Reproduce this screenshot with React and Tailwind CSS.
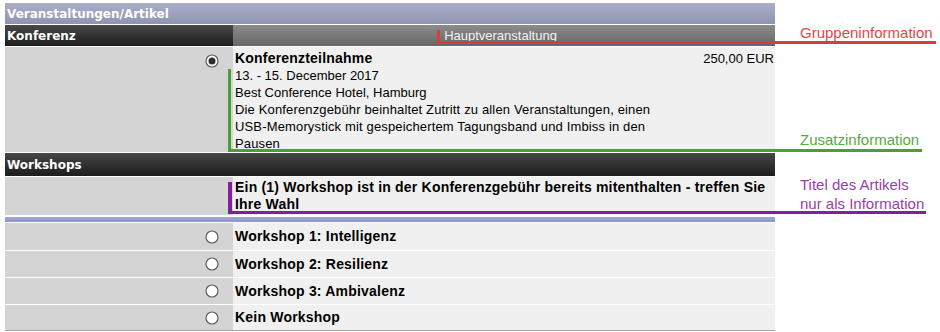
import React from "react";

function Radio({ checked }) {
  return (
    <svg width="14" height="14" viewBox="0 0 14 14" className="block">
      <circle cx="7" cy="7" r="6" fill="#ffffff" stroke="#5c5c5c" strokeWidth="1.2" />
      {checked && <circle cx="7" cy="7" r="3.5" fill="#2e2e2e" />}
    </svg>
  );
}

function WorkshopRow({ label, h, last }) {
  return (
    <div className={`flex ${h} ${last ? "border-b border-[#a8a8a8]" : "mb-px"}`}>
      <div className="w-[228px] bg-[#d4d4d4] flex items-center justify-end pr-[14px]">
        <Radio />
      </div>
      <div className="flex-1 bg-[#f0f0f0] flex items-center pl-[2px] text-[14px] font-bold tracking-[0.2px] text-black">
        {label}
      </div>
    </div>
  );
}

export default function App() {
  const sans = "font-['Liberation_Sans',Arial,sans-serif]";
  const hdr = "font-['DejaVu_Sans',Verdana,sans-serif] font-bold text-[12px] text-white";
  return (
    <div className={`relative w-[940px] h-[332px] bg-white overflow-hidden ${sans}`}>
      <div className="ml-[5px] pt-[3px] w-[770px] flex flex-col">
        {/* Header */}
        <div className={`h-[21px] mb-px flex items-center pl-[2px] bg-linear-to-b from-[#a9afc9] to-[#8f95b1] ${hdr}`}>
          Veranstaltungen/Artikel
        </div>
        {/* Konferenz group */}
        <div className="h-[21px] mb-px flex">
          <div className={`w-[228px] flex items-center pl-[2px] bg-linear-to-b from-[#4a4a4a] to-[#1d1d1d] ${hdr}`}>
            Konferenz
          </div>
          <div className="flex-1 flex items-center justify-center pr-[7px] bg-linear-to-b from-[#8c8c8c] to-[#676767] text-[13px] text-[#f2f2f2]">
            Hauptveranstaltung
          </div>
        </div>
        <div className="h-[105px] mb-px flex">
          <div className="w-[228px] bg-[#d4d4d4] flex justify-end items-start pt-[7px] pr-[14px]">
            <Radio checked />
          </div>
          <div className="flex-1 bg-[#f0f0f0] pt-[3px] pl-[2px] pr-[1px] text-black">
            <div className="flex justify-between h-[17px] items-center">
              <span className="text-[14px] font-bold tracking-[0.2px]">Konferenzteilnahme</span>
              <span className="text-[13px]">250,00 EUR</span>
            </div>
            <div className="text-[13px] leading-[17px] whitespace-nowrap">
              <div>13. - 15. December 2017</div>
              <div>Best Conference Hotel, Hamburg</div>
              <div className="tracking-[0.15px]">Die Konferenzgebühr beinhaltet Zutritt zu allen Veranstaltungen, einen</div>
              <div className="tracking-[0.15px]">USB-Memorystick mit gespeichertem Tagungsband und Imbiss in den</div>
              <div className="tracking-[0.15px]">Pausen</div>
            </div>
          </div>
        </div>
        {/* Workshops group */}
        <div className={`h-[23px] mb-px flex items-center pl-[2px] bg-linear-to-b from-[#474747] to-[#1d1d1d] ${hdr}`}>
          Workshops
        </div>
        <div className="h-[38px] flex">
          <div className="w-[228px] bg-[#d4d4d4]" />
          <div className="flex-1 bg-[#f0f0f0] pt-[2px] pl-[2px] text-[14px] leading-[17px] font-bold tracking-[0.2px] text-black whitespace-nowrap">
            <div>Ein (1) Workshop ist in der Konferenzgebühr bereits mitenthalten - treffen Sie</div>
            <div>Ihre Wahl</div>
          </div>
        </div>
        <div className="h-[5px] mt-[2px] mb-px bg-linear-to-b from-[#a3a7d6] to-[#8e93c8]" />
        <WorkshopRow label="Workshop 1: Intelligenz" h="h-[27px]" />
        <WorkshopRow label="Workshop 2: Resilienz" h="h-[26px]" />
        <WorkshopRow label="Workshop 3: Ambivalenz" h="h-[26px]" />
        <WorkshopRow label="Kein Workshop" h="h-[26px]" last />
      </div>

      {/* Annotations */}
      <div className="absolute left-[437px] top-[30px] w-[3px] h-[14px] bg-[#d93c3c]" />
      <div className="absolute left-[437px] top-[41px] w-[499px] h-[3px] bg-[#d93c3c]" />
      <div className="absolute left-[800px] top-[25px] text-[15px] leading-[15px] text-[#dc4a47] whitespace-nowrap">
        Gruppeninformation
      </div>

      <div className="absolute left-[228px] top-[69px] w-[3px] h-[83px] bg-[#4c9f38]" />
      <div className="absolute left-[228px] top-[149px] w-[694px] h-[3px] bg-[#4c9f38]" />
      <div className="absolute left-[800px] top-[132px] text-[15px] leading-[15px] text-[#5aa845] whitespace-nowrap">
        Zusatzinformation
      </div>

      <div className="absolute left-[228px] top-[182px] w-[4px] h-[32px] bg-[#80209c]" />
      <div className="absolute left-[228px] top-[211px] w-[698px] h-[3px] bg-[#80209c]" />
      <div className="absolute left-[800px] top-[175px] text-[15px] leading-[19px] text-[#9a3daf] whitespace-nowrap">
        <div>Titel des Artikels</div>
        <div>nur als Information</div>
      </div>
    </div>
  );
}
